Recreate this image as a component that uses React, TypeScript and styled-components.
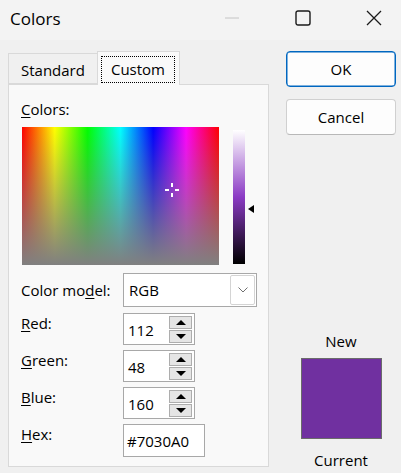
import React from "react";
import styled, { createGlobalStyle } from "styled-components";

const GlobalStyle = createGlobalStyle`
  html, body {
    margin: 0;
    padding: 0;
    background: #f0f0f0;
  }
  body {
    font-family: "Open Sans", "Noto Sans", "Liberation Sans", sans-serif;
    font-size: 15px;
    color: #000;
  }
`;

const Window = styled.div`
  width: 401px;
  height: 473px;
  display: flex;
  flex-direction: column;
  background: #f0f0f0;
  overflow: hidden;
`;

const TitleBar = styled.div`
  height: 40px;
  display: flex;
  align-items: center;
  background: #f3f3f3;
`;

const Title = styled.div`
  flex: 1;
  padding-left: 10px;
  padding-bottom: 4px;
  font-size: 17px;
`;

const CaptionButton = styled.div<{ $disabled?: boolean }>`
  width: 46px;
  height: 36px;
  display: flex;
  align-items: center;
  justify-content: center;
  margin-right: 25px;
  padding-bottom: 4px;
  color: ${(p) => (p.$disabled ? "#c4c4c4" : "#1a1a1a")};

  &:last-child {
    margin-right: 4px;
  }
`;

const Content = styled.div`
  flex: 1;
  display: flex;
  padding: 11px 5px 0 8px;
`;

const LeftCol = styled.div`
  width: 261px;
  display: flex;
  flex-direction: column;
`;

const TabStrip = styled.div`
  height: 33px;
  display: flex;
  align-items: flex-end;
  position: relative;
  z-index: 1;
`;

const Tab = styled.div<{ $selected?: boolean }>`
  height: ${(p) => (p.$selected ? 34 : 31)}px;
  margin-bottom: ${(p) => (p.$selected ? -1 : 0)}px;
  padding: 0 ${(p) => (p.$selected ? 4 : 12)}px 0 ${(p) => (p.$selected ? 3 : 12)}px;
  display: flex;
  align-items: center;
  box-sizing: border-box;
  background: ${(p) => (p.$selected ? "#f9f9f9" : "#f0f0f0")};
  border: 1px solid #d9d9d9;
  border-bottom: ${(p) => (p.$selected ? "none" : "1px solid #d9d9d9")};
  ${(p) => (p.$selected ? "padding-top: 1px;" : "border-right: none; padding-top: 2px;")}
`;

const FocusRect = styled.span`
  border: 1px dotted #000;
  padding: 2px 9px 3px 9px;
  line-height: 20px;
`;

const Panel = styled.div`
  flex: 0 0 383px;
  box-sizing: border-box;
  background: #f9f9f9;
  border: 1px solid #d9d9d9;
  padding: 14px 12px 0 12px;
  display: flex;
  flex-direction: column;
`;

const Label = styled.div`
  line-height: 20px;
  white-space: nowrap;
`;

const SpectrumRow = styled.div`
  display: flex;
  margin-top: 8px;
  padding-left: 1px;
`;

const Spectrum = styled.div`
  position: relative;
  width: 197px;
  height: 138px;
  background: linear-gradient(to bottom, rgba(128, 128, 128, 0) 0%, rgba(128, 128, 128, 1) 100%),
    linear-gradient(
      to right,
      #ff0000 0%,
      #ffff00 16.6%,
      #00ff00 33.3%,
      #00ffff 50%,
      #0000ff 66.6%,
      #ff00ff 83.3%,
      #ff0000 100%
    );
`;

const CrossBit = styled.div`
  position: absolute;
  background: #fff;
`;

const LumWrap = styled.div`
  position: relative;
  margin: 3px 0 0 14px;
  width: 20px;
  height: 134px;
`;

const LumBar = styled.div`
  width: 12px;
  height: 134px;
  background: linear-gradient(to bottom, #ffffff 0%, hsl(275, 54%, 50%) 50%, #000000 100%);
`;

const LumArrow = styled.div`
  position: absolute;
  left: 15px;
  width: 0;
  height: 0;
  border-top: 4px solid transparent;
  border-bottom: 4px solid transparent;
  border-right: 6px solid #000;
`;

const FormGrid = styled.div`
  display: grid;
  grid-template-columns: 102px auto;
  row-gap: 5px;
  margin-top: 8px;
  justify-items: start;
`;

const FieldLabel = styled(Label)<{ $offset?: number }>`
  padding-top: ${(p) => p.$offset ?? 0}px;
`;

const Select = styled.div`
  width: 134px;
  height: 34px;
  box-sizing: border-box;
  background: #fff;
  border: 1px solid #a8a8a8;
  display: flex;
  align-items: center;
  padding-left: 5px;
  margin-bottom: 1px;
`;

const SelectText = styled.div`
  flex: 1;
`;

const DropButton = styled.div`
  width: 25px;
  height: 30px;
  box-sizing: border-box;
  border: 1px solid #d4d4d4;
  border-radius: 2px;
  margin-right: 1px;
  display: flex;
  align-items: center;
  justify-content: center;
  color: #707070;
`;

const SpinBox = styled.div`
  width: 72px;
  height: 32px;
  box-sizing: border-box;
  background: #fff;
  border: 1px solid #a8a8a8;
  display: flex;
  align-items: center;
  padding-left: 4px;
`;

const SpinValue = styled.div`
  flex: 1;
  padding-top: 1px;
`;

const SpinButtons = styled.div`
  display: flex;
  flex-direction: column;
  margin-right: 2px;
`;

const SpinButton = styled.div`
  width: 23px;
  height: 13px;
  box-sizing: border-box;
  background: #e5e5e5;
  border: 1px solid #adadad;
  display: flex;
  align-items: center;
  justify-content: center;

  & + & {
    margin-top: 1px;
  }
`;

const Triangle = styled.div<{ $up?: boolean }>`
  width: 0;
  height: 0;
  border-left: 5px solid transparent;
  border-right: 5px solid transparent;
  ${(p) => (p.$up ? "border-bottom: 5px solid #000;" : "border-top: 5px solid #000;")}
`;

const TextBox = styled.div`
  width: 82px;
  height: 33px;
  box-sizing: border-box;
  background: #fff;
  border: 1px solid #a8a8a8;
  display: flex;
  align-items: center;
  padding-left: 3px;
`;

const RightCol = styled.div`
  width: 110px;
  margin-left: 17px;
  display: flex;
  flex-direction: column;
  padding-bottom: 3px;
`;

const DialogButton = styled.div<{ $primary?: boolean }>`
  height: 36px;
  box-sizing: border-box;
  display: flex;
  align-items: center;
  justify-content: center;
  background: #fdfdfd;
  border-radius: 4px;
  border: 1px solid ${(p) => (p.$primary ? "#0067c0" : "#d0d0d0")};
  ${(p) => (p.$primary ? "box-shadow: inset 0 0 0 0.5px #0067c0;" : "border-bottom-color: #b8b8b8;")}

  & + & {
    margin-top: 12px;
  }
`;

const Preview = styled.div`
  margin-top: auto;
  display: flex;
  flex-direction: column;
  align-items: center;
`;

const Swatch = styled.div<{ $color: string }>`
  width: 81px;
  height: 81px;
  box-sizing: border-box;
  margin: 7px 0 11px 1px;
  border: 1px solid #6b6b6b;
  background: ${(p) => p.$color};
`;

const U = styled.span`
  text-decoration: underline;
  text-underline-offset: 2px;
`;

const Spin: React.FC<{ value: string }> = ({ value }) => (
  <SpinBox>
    <SpinValue>{value}</SpinValue>
    <SpinButtons>
      <SpinButton>
        <Triangle $up />
      </SpinButton>
      <SpinButton>
        <Triangle />
      </SpinButton>
    </SpinButtons>
  </SpinBox>
);

export default function App() {
  const hue = 275;
  const sat = 0.54;
  const lum = 0.41;
  const cx = (hue / 360) * 197;
  const cy = (1 - sat) * 138;
  const arrowTop = (1 - lum) * 134 - 4;

  return (
    <>
      <GlobalStyle />
      <Window>
        <TitleBar>
          <Title>Colors</Title>
          <CaptionButton $disabled>
            <svg width="16" height="16" viewBox="0 0 16 16">
              <line x1="1" y1="8" x2="15" y2="8" stroke="currentColor" strokeWidth="1" />
            </svg>
          </CaptionButton>
          <CaptionButton>
            <svg width="16" height="16" viewBox="0 0 16 16">
              <rect x="1" y="1" width="14" height="14" rx="2" fill="none" stroke="currentColor" strokeWidth="1.4" />
            </svg>
          </CaptionButton>
          <CaptionButton>
            <svg width="16" height="16" viewBox="0 0 16 16">
              <path d="M1 1 L15 15 M15 1 L1 15" stroke="currentColor" strokeWidth="1.3" />
            </svg>
          </CaptionButton>
        </TitleBar>
        <Content>
          <LeftCol>
            <TabStrip>
              <Tab>Standard</Tab>
              <Tab $selected>
                <FocusRect>Custom</FocusRect>
              </Tab>
            </TabStrip>
            <Panel>
              <Label>
                <U>C</U>olors:
              </Label>
              <SpectrumRow>
                <Spectrum>
                  <CrossBit style={{ left: cx - 1, top: cy - 7, width: 2, height: 4 }} />
                  <CrossBit style={{ left: cx - 1, top: cy + 3, width: 2, height: 4 }} />
                  <CrossBit style={{ left: cx - 7, top: cy - 1, width: 4, height: 2 }} />
                  <CrossBit style={{ left: cx + 3, top: cy - 1, width: 4, height: 2 }} />
                </Spectrum>
                <LumWrap>
                  <LumBar />
                  <LumArrow style={{ top: arrowTop }} />
                </LumWrap>
              </SpectrumRow>
              <FormGrid>
                <FieldLabel $offset={7}>
                  Color mo<U>d</U>el:
                </FieldLabel>
                <Select>
                  <SelectText>RGB</SelectText>
                  <DropButton>
                    <svg width="10" height="6" viewBox="0 0 10 6">
                      <path d="M0.5 0.5 L5 5 L9.5 0.5" fill="none" stroke="currentColor" strokeWidth="1" />
                    </svg>
                  </DropButton>
                </Select>
                <FieldLabel>
                  <U>R</U>ed:
                </FieldLabel>
                <Spin value="112" />
                <FieldLabel>
                  <U>G</U>reen:
                </FieldLabel>
                <Spin value="48" />
                <FieldLabel>
                  <U>B</U>lue:
                </FieldLabel>
                <Spin value="160" />
                <FieldLabel>
                  <U>H</U>ex:
                </FieldLabel>
                <TextBox>#7030A0</TextBox>
              </FormGrid>
            </Panel>
          </LeftCol>
          <RightCol>
            <DialogButton $primary>OK</DialogButton>
            <DialogButton>Cancel</DialogButton>
            <Preview>
              <Label>New</Label>
              <Swatch $color="#7030A0" />
              <Label>Current</Label>
            </Preview>
          </RightCol>
        </Content>
      </Window>
    </>
  );
}
